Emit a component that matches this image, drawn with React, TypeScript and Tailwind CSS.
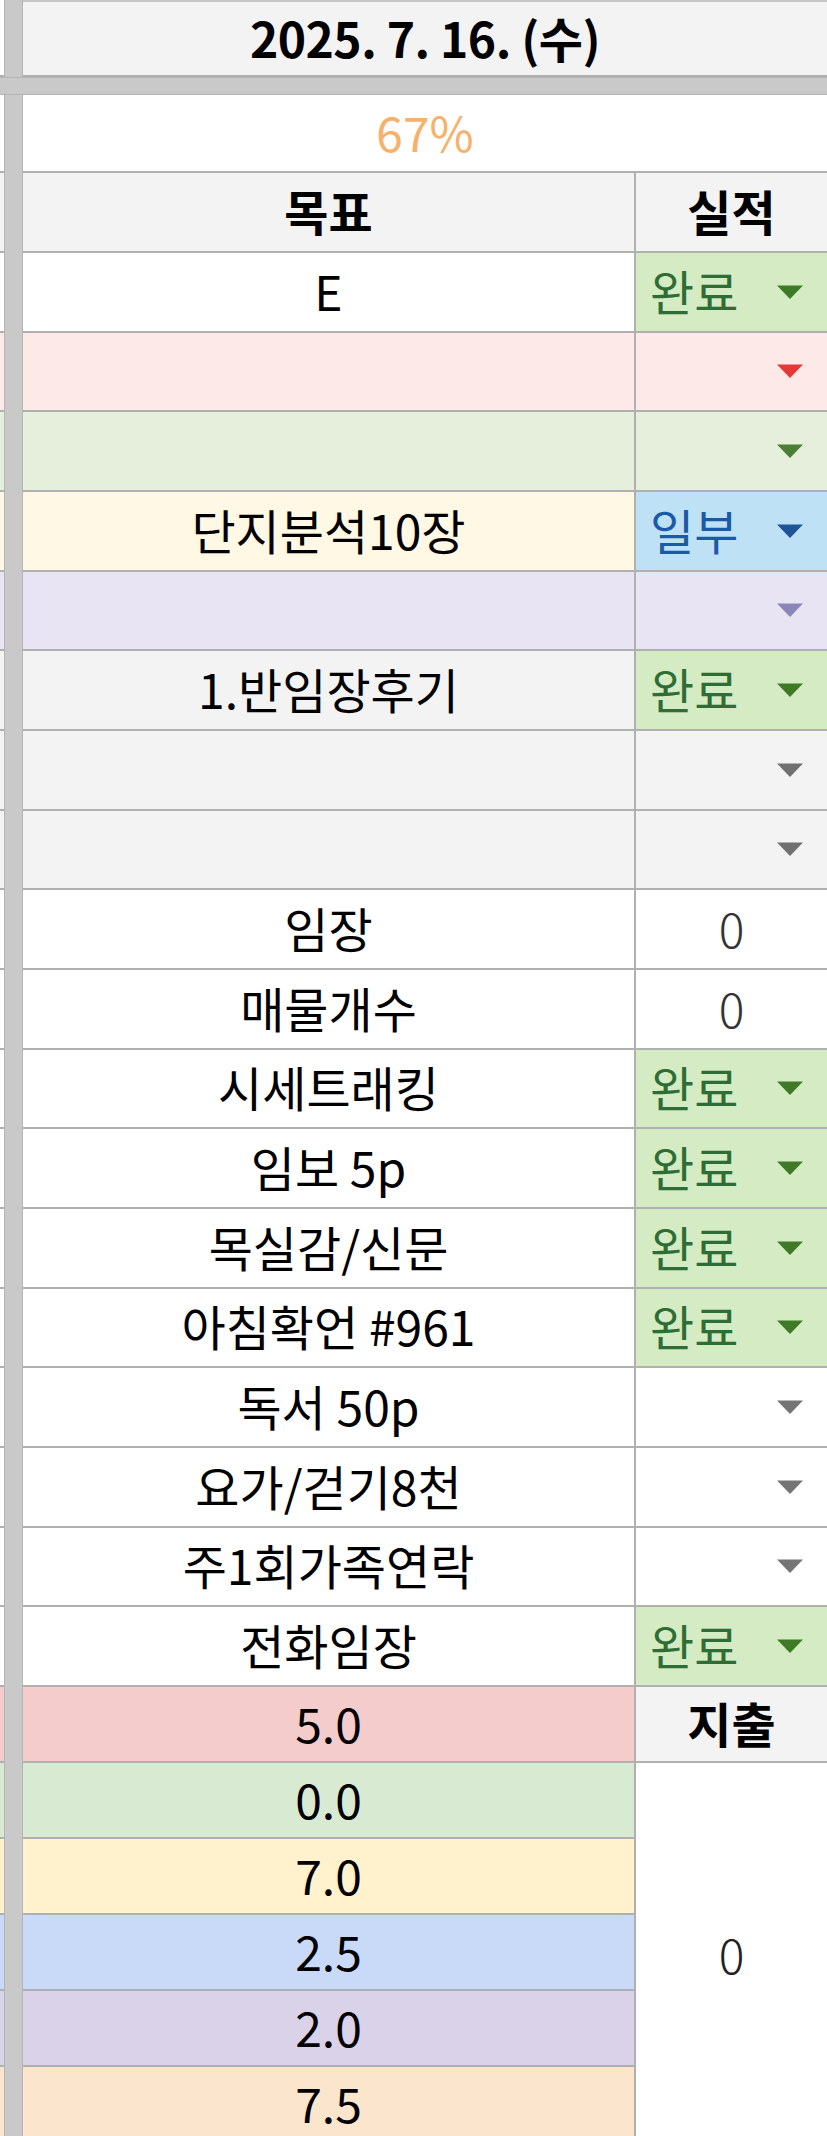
import React from "react";

type Right =
  | { kind: "chip"; label: string; bg: string; text: string; arrow: string }
  | { kind: "arrow"; arrow: string }
  | { kind: "num"; value: string };

type RowDef = { text: string; bg: string; right: Right };

const GREEN_BG = "bg-[#d5ebc3]";
const GREEN_TEXT = "text-[#2e6e34]";
const GREEN_ARROW = "#3f7a26";

const rows: RowDef[] = [
  { text: "E", bg: "bg-white", right: { kind: "chip", label: "완료", bg: GREEN_BG, text: GREEN_TEXT, arrow: GREEN_ARROW } },
  { text: "", bg: "bg-[#fce9e8]", right: { kind: "arrow", arrow: "#e53935" } },
  { text: "", bg: "bg-[#e5efdc]", right: { kind: "arrow", arrow: "#4a7f35" } },
  { text: "단지분석10장", bg: "bg-[#fff8e4]", right: { kind: "chip", label: "일부", bg: "bg-[#bfe1f6]", text: "text-[#1a5aa6]", arrow: "#1f5497" } },
  { text: "", bg: "bg-[#e8e4f4]", right: { kind: "arrow", arrow: "#8a86b8" } },
  { text: "1.반임장후기", bg: "bg-[#f3f3f3]", right: { kind: "chip", label: "완료", bg: GREEN_BG, text: GREEN_TEXT, arrow: GREEN_ARROW } },
  { text: "", bg: "bg-[#f3f3f3]", right: { kind: "arrow", arrow: "#707070" } },
  { text: "", bg: "bg-[#f3f3f3]", right: { kind: "arrow", arrow: "#707070" } },
  { text: "임장", bg: "bg-white", right: { kind: "num", value: "0" } },
  { text: "매물개수", bg: "bg-white", right: { kind: "num", value: "0" } },
  { text: "시세트래킹", bg: "bg-white", right: { kind: "chip", label: "완료", bg: GREEN_BG, text: GREEN_TEXT, arrow: GREEN_ARROW } },
  { text: "임보 5p", bg: "bg-white", right: { kind: "chip", label: "완료", bg: GREEN_BG, text: GREEN_TEXT, arrow: GREEN_ARROW } },
  { text: "목실감/신문", bg: "bg-white", right: { kind: "chip", label: "완료", bg: GREEN_BG, text: GREEN_TEXT, arrow: GREEN_ARROW } },
  { text: "아침확언 #961", bg: "bg-white", right: { kind: "chip", label: "완료", bg: GREEN_BG, text: GREEN_TEXT, arrow: GREEN_ARROW } },
  { text: "독서 50p", bg: "bg-white", right: { kind: "arrow", arrow: "#757575" } },
  { text: "요가/걷기8천", bg: "bg-white", right: { kind: "arrow", arrow: "#757575" } },
  { text: "주1회가족연락", bg: "bg-white", right: { kind: "arrow", arrow: "#757575" } },
  { text: "전화임장", bg: "bg-white", right: { kind: "chip", label: "완료", bg: GREEN_BG, text: GREEN_TEXT, arrow: GREEN_ARROW } },
];

const scores: { v: string; bg: string }[] = [
  { v: "0.0", bg: "bg-[#d9ead3]" },
  { v: "7.0", bg: "bg-[#fff2cc]" },
  { v: "2.5", bg: "bg-[#c9daf8]" },
  { v: "2.0", bg: "bg-[#d9d2e9]" },
  { v: "7.5", bg: "bg-[#fce5cd]" },
];

function Arrow({ color }: { color: string }) {
  return (
    <svg width="28" height="15" viewBox="0 0 28 15" className="absolute right-[23px] top-1/2 -translate-y-1/2">
      <polygon points="1,1 27,1 14,14.5" fill={color} />
    </svg>
  );
}

function Bar() {
  return <div className="w-[19px] shrink-0 self-stretch bg-[#c9c9c9] border-x border-[#b5b5b5]" />;
}

function RightCell({ r, rowBg }: { r: Right; rowBg: string }) {
  if (r.kind === "chip") {
    return (
      <div className={`relative w-[191px] h-full flex items-center pl-[14px] border-b-2 border-[#b0b0b0] ${r.bg}`}>
        <span className={`${r.text} text-[48px] leading-none relative -top-[2px]`}>{r.label}</span>
        <Arrow color={r.arrow} />
      </div>
    );
  }
  if (r.kind === "arrow") {
    return (
      <div className={`relative w-[191px] h-full border-b-2 border-[#b0b0b0] ${rowBg}`}>
        <Arrow color={r.arrow} />
      </div>
    );
  }
  return (
    <div className={`w-[191px] h-full flex items-center justify-center border-b-2 border-[#b0b0b0] ${rowBg}`}>
      <span className="text-[48px] leading-none text-[#333] font-light relative -top-[2px]">{r.value}</span>
    </div>
  );
}

export default function App() {
  return (
    <div className="w-[827px] h-[2136px] overflow-hidden bg-white font-['Noto_Sans_CJK_KR','Noto_Sans',sans-serif] text-black">
      {/* date row */}
      <div className="flex h-[77px]">
        <div className="w-[4px] bg-white border-b-2 border-[#b0b0b0]" />
        <Bar />
        <div className="flex-1 flex items-center justify-center bg-[#f3f3f3] border-b-2 border-[#b0b0b0] border-t-2 border-t-[#c6c6c6]">
          <span className="text-[48px] font-bold leading-none tracking-[-0.5px] relative -top-[2px]">2025. 7. 16. (수)</span>
        </div>
      </div>
      {/* freeze band */}
      <div className="h-[18px] bg-[#c9c9c9] border-y border-[#b5b5b5]" />
      {/* percent row */}
      <div className="flex h-[78px]">
        <div className="w-[4px] bg-white border-b-2 border-[#b0b0b0]" />
        <Bar />
        <div className="flex-1 flex items-center justify-center bg-white border-b-2 border-[#b0b0b0]">
          <span className="text-[48px] leading-none text-[#f6b26b] relative -top-[2px]">67%</span>
        </div>
      </div>
      {/* header row */}
      <div className="flex h-[80px]">
        <div className="w-[4px] bg-[#f3f3f3] border-b-2 border-[#b0b0b0]" />
        <Bar />
        <div className="w-[613px] flex items-center justify-center bg-[#f3f3f3] border-b-2 border-r-2 border-[#b0b0b0]">
          <span className="text-[48px] font-bold leading-none relative -top-[2px]">목표</span>
        </div>
        <div className="w-[191px] flex items-center justify-center bg-[#f3f3f3] border-b-2 border-[#b0b0b0]">
          <span className="text-[48px] font-bold leading-none relative -top-[2px]">실적</span>
        </div>
      </div>
      {/* data rows */}
      {rows.map((row, i) => (
        <div key={i} className="flex h-[79.67px]">
          <div className={`w-[4px] border-b-2 border-[#b0b0b0] ${row.bg}`} />
          <Bar />
          <div className={`w-[613px] flex items-center justify-center border-b-2 border-r-2 border-[#b0b0b0] ${row.bg}`}>
            <span className="text-[48px] leading-none whitespace-nowrap relative -top-[2px]">{row.text}</span>
          </div>
          <RightCell r={row.right} rowBg={row.bg} />
        </div>
      ))}
      {/* 5.0 / 지출 */}
      <div className="flex h-[76px]">
        <div className="w-[4px] bg-[#f4cccc] border-b-2 border-[#b0b0b0]" />
        <Bar />
        <div className="w-[613px] flex items-center justify-center bg-[#f4cccc] border-b-2 border-r-2 border-[#b0b0b0]">
          <span className="text-[48px] leading-none relative -top-[2px]">5.0</span>
        </div>
        <div className="w-[191px] flex items-center justify-center bg-[#f3f3f3] border-b-2 border-[#b0b0b0]">
          <span className="text-[48px] font-bold leading-none relative -top-[2px]">지출</span>
        </div>
      </div>
      {/* score rows with merged cell */}
      <div className="flex">
        <div className="flex flex-col">
          {scores.map((s, i) => (
            <div key={i} className="flex h-[76px]">
              <div className={`w-[4px] border-b-2 border-[#b0b0b0] ${s.bg}`} />
              <Bar />
              <div className={`w-[613px] flex items-center justify-center border-b-2 border-r-2 border-[#b0b0b0] ${s.bg}`}>
                <span className="text-[48px] leading-none relative -top-[2px]">{s.v}</span>
              </div>
            </div>
          ))}
        </div>
        <div className="w-[191px] flex items-center justify-center bg-white">
          <span className="text-[48px] leading-none text-[#222] font-light">0</span>
        </div>
      </div>
    </div>
  );
}
